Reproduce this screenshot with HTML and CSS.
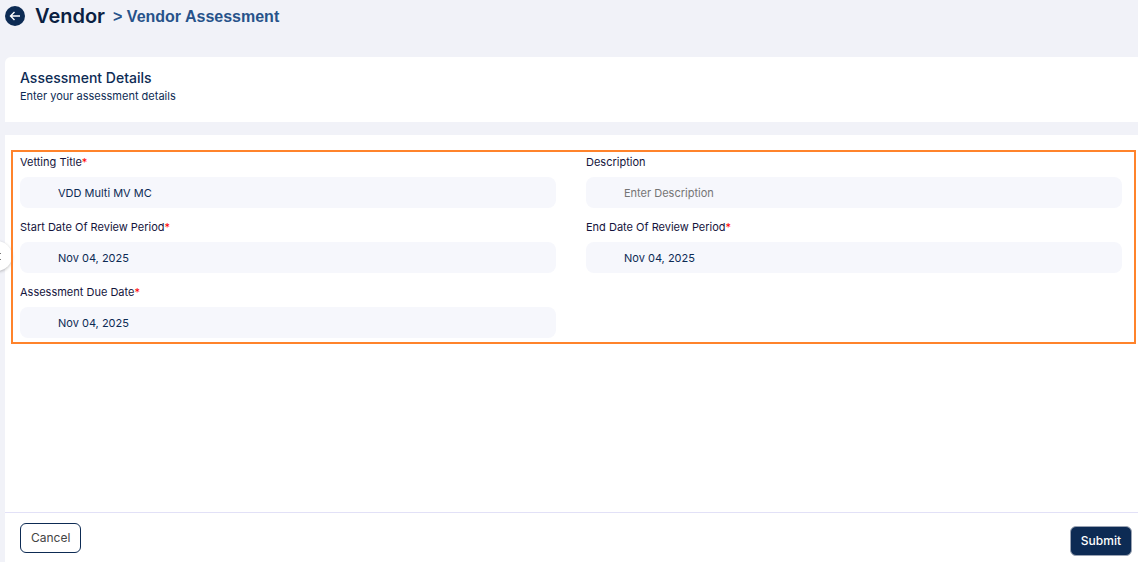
FILE: index.html
```html
<!DOCTYPE html>
<html lang="en">
<head>
    <meta charset="UTF-8">
    <meta name="viewport" content="width=device-width, initial-scale=1.0">
    <title>Vendor Assessment</title>

    <link rel="stylesheet" href="styles.css">
</head>
<body>

    <header class="topbar">
        <a href="#" class="back" aria-label="Back">
            <svg width="20" height="20" viewBox="0 0 20 20">
                <circle cx="10" cy="10" r="10" fill="#0d2b54"/>
                <path d="M15 10H5.5M9.5 6L5.5 10L9.5 14" fill="none" stroke="#fff" stroke-width="1.4"/>
            </svg>
        </a>
        <h1>Vendor</h1>
        <span class="crumb">&gt; Vendor Assessment</span>
    </header>

    <section class="intro">
        <h2>Assessment Details</h2>
        <p>Enter your assessment details</p>
    </section>

    <form class="panel">
        <div class="fields">
            <div class="field">
                <label for="title">Vetting Title<span class="req">*</span></label>
                <input type="text" id="title" value="VDD Multi MV MC">
            </div>
            <div class="field">
                <label for="description">Description</label>
                <input type="text" id="description" placeholder="Enter Description">
            </div>
            <div class="field">
                <label for="start">Start Date Of Review Period<span class="req">*</span></label>
                <input type="text" id="start" value="Nov 04, 2025">
            </div>
            <div class="field">
                <label for="end">End Date Of Review Period<span class="req">*</span></label>
                <input type="text" id="end" value="Nov 04, 2025">
            </div>
            <div class="field">
                <label for="due">Assessment Due Date<span class="req">*</span></label>
                <input type="text" id="due" value="Nov 04, 2025">
            </div>
        </div>

        <footer class="actions">
            <button type="button" class="cancel">Cancel</button>
            <button type="submit" class="submit">Submit</button>
        </footer>
    </form>

    <button type="button" class="toggle" aria-label="Toggle menu">
        <svg width="10" height="10" viewBox="0 0 10 10">
            <path d="M0 2.5H1M0 8.5H1" stroke="#777" stroke-width="1"/>
        </svg>
    </button>

</body>
</html>
```

FILE: styles.css
```css
* {
    margin: 0;
    padding: 0;
    box-sizing: border-box;
}

body {
    display: flex;
    flex-direction: column;
    min-height: 100vh;
    padding-left: 5px;
    background-color: #f1f2f8;
    color: #0d2b54;
    font: normal 11px/16px Inter, sans-serif;
    overflow-x: hidden;
}

.topbar {
    display: flex;
    align-items: center;
    height: 32px;
    margin-bottom: 25px;
}

.back {
    height: 20px;
    margin-right: 10px;
}

.back svg {
    display: block;
}

h1 {
    margin-right: 8px;
    color: #0b1f42;
    font-size: 20px;
    font-weight: 600;
    line-height: 32px;
}

.crumb {
    padding-top: 2px;
    color: #27528a;
    font: bold 16px/32px "Liberation Sans", Arial, sans-serif;
}

.intro {
    margin-bottom: 13px;
    padding: 12px 15px 18px;
    background-color: white;
    border-radius: 6px 0 0 0;
}

h2 {
    padding-bottom: 1px;
    font-size: 14px;
    font-weight: 500;
    line-height: 18px;
}

.panel {
    display: flex;
    flex: 1;
    flex-direction: column;
    padding-top: 15px;
    background-color: white;
}

.fields {
    position: relative;
    z-index: 2;
    display: grid;
    grid-template-columns: 1fr 1fr;
    gap: 11px 30px;
    margin: 0 2px 0 6px;
    padding: 2px 12px 4px 7px;
    border: 2px solid #ff832b;
}

.field {
    display: flex;
    flex-direction: column;
    gap: 7px;
}

label {
    color: #14143c;
}

.req {
    color: red;
}

.field input {
    width: 100%;
    height: 31px;
    padding: 0 38px;
    border: none;
    border-radius: 8px;
    background-color: #f6f7fc;
    color: #0d2b54;
    font: inherit;
}

.field input::placeholder {
    color: #757575;
}

.actions {
    display: flex;
    justify-content: space-between;
    margin-top: auto;
    padding: 10px 6px 6px 15px;
    border-top: 1px solid #e2e1f7;
}

.actions button {
    height: 30px;
    padding: 0 10px 1px;
    border-radius: 6px;
    font: normal 12px Inter, sans-serif;
}

.cancel {
    border: 1px solid #0d2b54;
    background-color: white;
    color: #444;
}

.actions .submit {
    margin-top: 3px;
    border: 1px solid #9aa3b3;
    background-color: #0d2b54;
    color: white;
    font-weight: 500;
}

/* menu handle on the left edge of the window */
.toggle {
    position: absolute;
    z-index: 1;
    top: 241px;
    left: -18px;
    display: flex;
    align-items: center;
    width: 30px;
    height: 30px;
    padding-left: 18px;
    border: none;
    border-radius: 50%;
    background-color: white;
    box-shadow: 0 1px 3px rgba(0, 0, 0, 0.25);
}
```
